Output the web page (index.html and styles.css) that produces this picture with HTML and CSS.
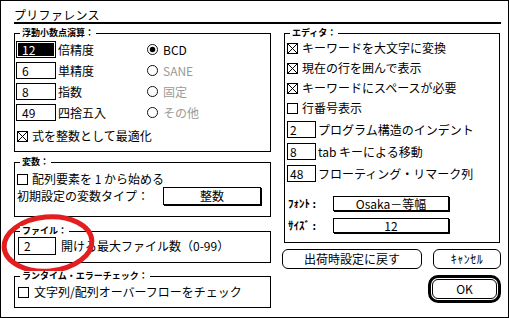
FILE: index.html
```html
<!DOCTYPE html>
<html lang="ja">
<head>
<meta charset="utf-8">
<title>プリファレンス</title>
<link rel="stylesheet" href="styles.css">
</head>
<body>
<div class="dialog">
  <div class="title">プリファレンス</div>
  <div class="columns">
    <div class="col-left">
      <div class="group g-float">
        <div class="legend">浮動小数点演算：</div>
        <div class="box box-float">
          <div class="frow">
            <span class="field sel">12</span><span class="flabel">倍精度</span>
            <svg class="radio" viewBox="0 0 12 12"><circle cx="6" cy="6" r="5.5" fill="#fff" stroke="#000"/><circle cx="6" cy="6" r="3" fill="#000"/></svg>
            <span class="rlabel">BCD</span>
          </div>
          <div class="frow">
            <span class="field">6</span><span class="flabel">単精度</span>
            <svg class="radio" viewBox="0 0 12 12"><circle cx="6" cy="6" r="5.5" fill="#fff" stroke="#000"/></svg>
            <span class="rlabel dim">SANE</span>
          </div>
          <div class="frow">
            <span class="field">8</span><span class="flabel">指数</span>
            <svg class="radio" viewBox="0 0 12 12"><circle cx="6" cy="6" r="5.5" fill="#fff" stroke="#000"/></svg>
            <span class="rlabel dim">固定</span>
          </div>
          <div class="frow">
            <span class="field">49</span><span class="flabel">四捨五入</span>
            <svg class="radio" viewBox="0 0 12 12"><circle cx="6" cy="6" r="5.5" fill="#fff" stroke="#000"/></svg>
            <span class="rlabel dim">その他</span>
          </div>
          <div class="cbrow cb-float">
            <svg class="cb" viewBox="0 0 11 11" shape-rendering="crispEdges"><rect x="0.5" y="0.5" width="10" height="10" fill="#fff" stroke="#000"/><path d="M1 1 L10 10 M10 1 L1 10" stroke="#000" fill="none"/></svg>
            <span>式を整数として最適化</span>
          </div>
        </div>
      </div>

      <div class="group g-var">
        <div class="legend">変数：</div>
        <div class="box box-var">
          <div class="cbrow">
            <svg class="cb" viewBox="0 0 11 11" shape-rendering="crispEdges"><rect x="0.5" y="0.5" width="10" height="10" fill="#fff" stroke="#000"/></svg>
            <span>配列要素を 1 から始める</span>
          </div>
          <div class="typerow">
            <span>初期設定の変数タイプ：</span>
            <span class="popup pop-type">整数</span>
          </div>
        </div>
      </div>

      <div class="group g-file">
        <div class="legend">ファイル：</div>
        <div class="box box-file">
          <span class="field field-file">2</span>
          <span class="filelabel">開ける最大ファイル数（0-99）</span>
        </div>
      </div>

      <div class="group g-err">
        <div class="legend">ランタイム・エラーチェック：</div>
        <div class="box box-err">
          <div class="cbrow">
            <svg class="cb" viewBox="0 0 11 11" shape-rendering="crispEdges"><rect x="0.5" y="0.5" width="10" height="10" fill="#fff" stroke="#000"/></svg>
            <span>文字列/配列オーバーフローをチェック</span>
          </div>
        </div>
      </div>
    </div>

    <div class="col-right">
      <div class="group g-edit">
        <div class="legend">エディタ：</div>
        <div class="box box-edit">
          <div class="cbrow erow">
            <svg class="cb" viewBox="0 0 11 11" shape-rendering="crispEdges"><rect x="0.5" y="0.5" width="10" height="10" fill="#fff" stroke="#000"/><path d="M1 1 L10 10 M10 1 L1 10" stroke="#000" fill="none"/></svg>
            <span>キーワードを大文字に変換</span>
          </div>
          <div class="cbrow erow">
            <svg class="cb" viewBox="0 0 11 11" shape-rendering="crispEdges"><rect x="0.5" y="0.5" width="10" height="10" fill="#fff" stroke="#000"/><path d="M1 1 L10 10 M10 1 L1 10" stroke="#000" fill="none"/></svg>
            <span>現在の行を囲んで表示</span>
          </div>
          <div class="cbrow erow">
            <svg class="cb" viewBox="0 0 11 11" shape-rendering="crispEdges"><rect x="0.5" y="0.5" width="10" height="10" fill="#fff" stroke="#000"/><path d="M1 1 L10 10 M10 1 L1 10" stroke="#000" fill="none"/></svg>
            <span>キーワードにスペースが必要</span>
          </div>
          <div class="cbrow erow">
            <svg class="cb" viewBox="0 0 11 11" shape-rendering="crispEdges"><rect x="0.5" y="0.5" width="10" height="10" fill="#fff" stroke="#000"/></svg>
            <span>行番号表示</span>
          </div>
          <div class="nrows">
            <div class="nrow"><span class="field nfield">2</span><span>プログラム構造のインデント</span></div>
            <div class="nrow"><span class="field nfield">8</span><span>tab キーによる移動</span></div>
            <div class="nrow"><span class="field nfield">48</span><span>フローティング・リマーク列</span></div>
          </div>
          <div class="prow prow-first"><span class="plabel">ﾌｫﾝﾄ :</span><span class="popup pop-font">Osaka－等幅</span></div>
          <div class="prow"><span class="plabel">ｻｲｽﾞ :</span><span class="popup pop-font">12</span></div>
        </div>
      </div>
      <div class="btnrow">
        <span class="btn btn-reset">出荷時設定に戻す</span>
        <span class="btn btn-cancel">ｷｬﾝｾﾙ</span>
      </div>
      <div class="okrow">
        <span class="okring"><span class="btn btn-ok">OK</span></span>
      </div>
    </div>
  </div>
  <svg class="annot" viewBox="0 0 100 66" width="100" height="66"><ellipse cx="47" cy="33" rx="44" ry="27" fill="none" stroke="#e41e1e" stroke-width="5" transform="rotate(-5 47 33)"/></svg>
</div>
</body>
</html>
```

FILE: styles.css
```css
html, body {
  margin: 0;
  padding: 0;
  background: #fff;
}
body {
  font-family: "Noto Sans CJK JP", "Noto Sans", sans-serif;
  font-size: 12px;
  color: #000;
}
.dialog {
  position: relative;
  width: 509px;
  height: 318px;
  box-sizing: border-box;
  border: 1px solid #000;
  padding: 0 7px 0 13px;
  background: #fff;
}
.title {
  padding-top: 7px;
  height: 14px;
  line-height: 14px;
  font-size: 12px;
  letter-spacing: 0.3px;
  border-bottom: 2px solid #000;
}
.columns {
  display: grid;
  grid-template-columns: 257px 217px;
  column-gap: 13px;
  align-items: start;
}
.col-left, .col-right {
  display: flex;
  flex-direction: column;
}
.legend {
  position: relative;
  z-index: 1;
  display: block;
  width: max-content;
  margin: 0 0 -5px 6px;
  padding: 0 2px;
  height: 10px;
  line-height: 10px;
  font-size: 9px;
  font-weight: bold;
  background: #fff;
}
.box {
  box-sizing: border-box;
  border: 1px solid #000;
}
.g-float { margin-top: 4px; }
.g-var { margin-top: 5px; }
.g-file { margin-top: 9px; }
.g-err { margin-top: 8px; }
.g-edit { margin-top: 4px; margin-right: 1px; }

.box-float {
  height: 119px;
  padding: 7px 0 0 1px;
  display: flex;
  flex-direction: column;
  gap: 4px;
}
.frow {
  display: grid;
  grid-template-columns: 40px 91px 11px auto;
  align-items: center;
  height: 17px;
}
.field {
  box-sizing: border-box;
  display: block;
  height: 17px;
  border: 1px solid #000;
  padding-left: 5px;
  line-height: 15px;
  font-size: 12px;
  background: #fff;
}
.field.sel {
  background: #000;
  color: #fff;
  box-shadow: inset 0 0 0 1px #fff;
}
.flabel {
  padding-left: 2px;
  line-height: 17px;
}
.radio {
  width: 11px;
  height: 11px;
  display: block;
}
.rlabel {
  padding-left: 5px;
  line-height: 17px;
}
.dim {
  color: #9a9a9a;
}
.cbrow {
  display: flex;
  align-items: center;
  gap: 4px;
  height: 16px;
  line-height: 16px;
}
.cb {
  width: 11px;
  height: 11px;
  display: block;
  flex: none;
}
.cb-float {
  margin-top: 3px;
  margin-left: 1px;
}

.box-var {
  height: 55px;
  padding: 8px 0 0 2px;
}
.typerow {
  display: grid;
  grid-template-columns: 146px 98px;
  align-items: start;
  height: 19px;
  line-height: 18px;
}
.popup {
  box-sizing: border-box;
  display: block;
  border: 1px solid #000;
  box-shadow: 1px 1px 0 #000;
  text-align: center;
  background: #fff;
}
.pop-type {
  height: 18px;
  line-height: 16px;
}

.box-file {
  height: 32px;
  padding: 5px 0 0 3px;
  display: flex;
  align-items: flex-start;
  gap: 5px;
}
.field-file {
  width: 38px;
  height: 18px;
  line-height: 16px;
}
.filelabel {
  line-height: 18px;
}

.box-err {
  height: 32px;
  padding: 7px 0 0 3px;
}
.box-err .cbrow {
  gap: 5px;
}

.box-edit {
  height: 210px;
  padding: 4px 0 0 2px;
}
.erow {
  height: 20px;
  line-height: 20px;
}
.nrows {
  margin-top: 3px;
  display: flex;
  flex-direction: column;
  gap: 5px;
}
.nrow {
  display: flex;
  align-items: center;
  gap: 2px;
  height: 17px;
  line-height: 17px;
}
.nfield {
  width: 29px;
  padding-left: 2px;
  flex: none;
}
.prow {
  display: grid;
  grid-template-columns: 46px 116px;
  align-items: center;
  height: 16px;
  margin-top: 6px;
}
.prow-first {
  margin-top: 13px;
}
.plabel {
  font-size: 11px;
  font-weight: bold;
  line-height: 15px;
  padding-left: 1px;
}
.pop-font {
  height: 15px;
  line-height: 13px;
}

.btnrow {
  display: flex;
  gap: 11px;
  margin: 6px 0 0 -2px;
}
.btn {
  box-sizing: border-box;
  display: block;
  border: 1px solid #000;
  border-radius: 6px;
  text-align: center;
  background: #fff;
}
.btn-reset {
  width: 140px;
  height: 20px;
  line-height: 18px;
}
.btn-cancel {
  width: 68px;
  height: 20px;
  line-height: 18px;
  font-size: 12px;
  letter-spacing: 0.5px;
}
.okrow {
  display: flex;
  justify-content: flex-end;
  margin-top: 6px;
}
.okring {
  box-sizing: border-box;
  display: block;
  width: 73px;
  height: 28px;
  border: 3px solid #000;
  border-radius: 10px;
  padding: 1px;
}
.btn-ok {
  height: 20px;
  line-height: 18px;
  border-radius: 6px;
}
.annot {
  position: absolute;
  left: 0;
  top: 210px;
  overflow: visible;
}
```
